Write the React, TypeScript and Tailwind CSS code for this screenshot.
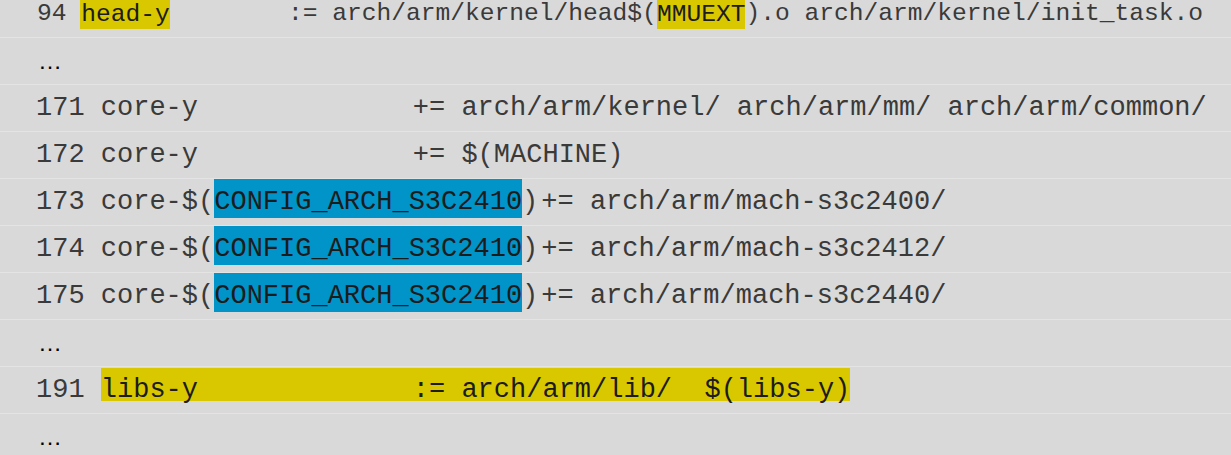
const mono = "font-['Liberation_Mono','Courier_New',monospace]";

function Row({ children, first }: { children: React.ReactNode; first?: boolean }) {
  return (
    <div
      className={`h-[47px] border-b border-[#e4e4e4] whitespace-pre leading-[46px] text-[#3a3a3a] ${
        first ? '-mt-[9px] pl-[37px] text-[24.6px]' : 'pl-[36px] text-[27px]'
      }`}
    >
      {children}
    </div>
  );
}

function Ellipsis() {
  return (
    <div className="h-[47px] border-b border-[#e4e4e4] pl-[38px] leading-[46px] text-[24px] text-black font-['Liberation_Sans',Arial,sans-serif]">
      …
    </div>
  );
}

function Blue({ children }: { children: React.ReactNode }) {
  return (
    <span className="inline-block align-top h-[39px] leading-[46px] bg-[#0094c9] text-[#1c1c1c]">
      {children}
    </span>
  );
}

export default function App() {
  return (
    <div className="w-[1231px] h-[455px] overflow-hidden bg-[#d9d9d9]">
      <div className={mono}>
        <Row first>
          {'94 '}
          <span className="inline-block align-top mt-[9px] h-[29px] leading-[29px] -ml-px pl-px bg-[#d9c800] text-[#1c1c1c]">
            head-y
          </span>
          {'        := arch/arm/kernel/head$('}
          <span className="inline-block align-top mt-[9px] h-[29px] leading-[29px] bg-[#d9c800] text-[#1c1c1c]">
            MMUEXT
          </span>
          {').o arch/arm/kernel/init_task.o'}
        </Row>
        <Ellipsis />
        <Row>
          {'171 '}
          <span className="inline-block w-[312px]">core-y</span>
          {'+= arch/arm/kernel/ arch/arm/mm/ arch/arm/common/'}
        </Row>
        <Row>
          {'172 '}
          <span className="inline-block w-[312px]">core-y</span>
          {'+= $(MACHINE)'}
        </Row>
        {['2400', '2412', '2440'].map((m, i) => (
          <Row key={m}>
            {`${173 + i} core-$(`}
            <Blue>CONFIG_ARCH_S3C2410</Blue>
            {')'}
            <span className="pl-[3px]">{`+= arch/arm/mach-s3c${m}/`}</span>
          </Row>
        ))}
        <Ellipsis />
        <Row>
          {'191 '}
          <span className="inline-block align-top mt-px h-[33px] leading-[44px] bg-[#d9c800] text-[#1c1c1c]">
            <span className="inline-block w-[312px]">libs-y</span>
            {':= arch/arm/lib/  $(libs-y)'}
          </span>
        </Row>
        <Ellipsis />
      </div>
    </div>
  );
}
